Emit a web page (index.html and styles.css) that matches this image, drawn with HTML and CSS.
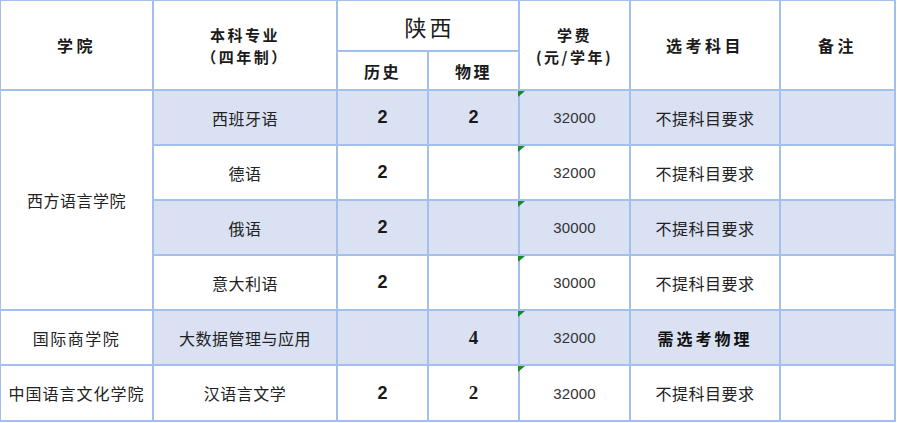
FILE: index.html
```html
<!DOCTYPE html>
<html lang="zh">
<head>
<meta charset="utf-8">
<title>招生计划</title>
<link rel="stylesheet" href="styles.css">
</head>
<body>
<div class="sheet">
  <div class="c hd tall sp3">学院</div>
  <div class="c hd tall two">本科专业<br>（四年制）</div>
  <div class="c prov wide">陕西</div>
  <div class="c hd tall two">学费<br>(元/学年)</div>
  <div class="c hd tall sp3">选考科目</div>
  <div class="c hd tall sp3">备注</div>
  <div class="c hd">历史</div>
  <div class="c hd">物理</div>

  <div class="c txt span4">西方语言学院</div>
  <div class="c txt f">西班牙语</div>
  <div class="c num f">2</div>
  <div class="c num f">2</div>
  <div class="c fee f">32000</div>
  <div class="c txt f">不提科目要求</div>
  <div class="c f"></div>

  <div class="c txt">德语</div>
  <div class="c num">2</div>
  <div class="c"></div>
  <div class="c fee">32000</div>
  <div class="c txt">不提科目要求</div>
  <div class="c"></div>

  <div class="c txt f">俄语</div>
  <div class="c num f">2</div>
  <div class="c f"></div>
  <div class="c fee f">30000</div>
  <div class="c txt f">不提科目要求</div>
  <div class="c f"></div>

  <div class="c txt">意大利语</div>
  <div class="c num">2</div>
  <div class="c"></div>
  <div class="c fee">30000</div>
  <div class="c txt">不提科目要求</div>
  <div class="c"></div>

  <div class="c txt sp2">国际商学院</div>
  <div class="c txt f">大数据管理与应用</div>
  <div class="c f"></div>
  <div class="c num serif f">4</div>
  <div class="c fee f">32000</div>
  <div class="c txt strong f">需选考物理</div>
  <div class="c f"></div>

  <div class="c txt sp1">中国语言文化学院</div>
  <div class="c txt">汉语言文学</div>
  <div class="c num">2</div>
  <div class="c num serif">2</div>
  <div class="c fee">32000</div>
  <div class="c txt">不提科目要求</div>
  <div class="c"></div>
</div>
</body>
</html>
```

FILE: styles.css
```css
html, body {
  margin: 0;
  padding: 0;
  background: #ffffff;
}

body {
  font-family: "Noto Sans CJK SC", "Noto Sans", sans-serif;
  color: #1f1f1f;
}

.sheet {
  display: grid;
  grid-template-columns: 153px 184px 91px 91px 111px 150px 115px;
  grid-template-rows: 51px 39px repeat(5, 55px) 56px;
  width: 896px;
  box-sizing: border-box;
  border-left: 1px solid #a5bfec;
  border-top: 1px solid #a5bfec;
}

.c {
  box-sizing: border-box;
  border-right: 2px solid #a5bfec;
  border-bottom: 2px solid #a5bfec;
  display: flex;
  align-items: center;
  justify-content: center;
  text-align: center;
  position: relative;
  background: #ffffff;
}

.f {
  background: #d9e1f3;
}

.tall {
  grid-row: span 2;
}

.wide {
  grid-column: span 2;
}

.span4 {
  grid-row: span 4;
}

.hd {
  font-weight: 700;
  font-size: 16px;
  line-height: 22px;
  letter-spacing: 2.5px;
  color: #1a1a1a;
}

.two {
  font-size: 15px;
  line-height: 22px;
  padding-top: 2px;
}

.sp3 {
  letter-spacing: 3.5px;
}

.prov {
  font-size: 22px;
  letter-spacing: 3px;
  font-weight: 400;
  color: #1a1a1a;
  padding-left: 3px;
}

.txt {
  font-size: 16px;
  letter-spacing: 0.5px;
  color: #222222;
}

.sp2 {
  letter-spacing: 1.5px;
}

.sp1 {
  letter-spacing: 1px;
}

.strong {
  font-weight: 700;
  letter-spacing: 3px;
  color: #111111;
}

.num {
  font-family: "Liberation Sans", Arial, sans-serif;
  font-weight: 700;
  font-size: 18px;
  color: #1a1a1a;
}

.num.serif {
  font-family: "Liberation Serif", "Times New Roman", serif;
  font-size: 19px;
}

.fee {
  font-family: "Liberation Sans", Arial, sans-serif;
  font-size: 15px;
  letter-spacing: 0.2px;
  color: #333333;
}

.fee::before {
  content: "";
  position: absolute;
  left: -2px;
  top: 0;
  width: 0;
  height: 0;
  border-top: 6px solid #178a2c;
  border-right: 7px solid transparent;
}
```
